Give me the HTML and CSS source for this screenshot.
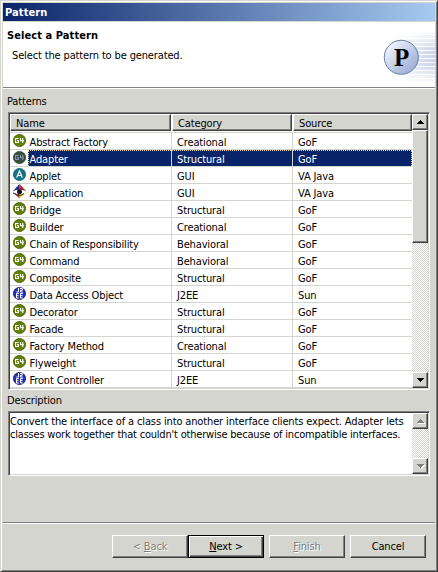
FILE: index.html
```html
<!DOCTYPE html>
<html lang="en">
<head>
<meta charset="utf-8">
<title>Pattern</title>
<link rel="stylesheet" href="styles.css">
</head>
<body>
<svg class="defs" aria-hidden="true">
  <symbol id="g4" viewBox="0 0 13 13">
    <circle cx="6.5" cy="6.5" r="6.1" fill="#628002" stroke="#3f5500" stroke-width=".8"/>
    <path d="M5.6 4.5H2.6V8.5H5.4V6.6H4.2M7.5 4V6.7H11M9.7 4V9" fill="none" stroke="#fff" stroke-width="1.1"/>
  </symbol>
  <symbol id="g4-selected" viewBox="0 0 13 13">
    <circle cx="6.5" cy="6.5" r="6.1" fill="#355138" stroke="#263d3c" stroke-width=".8"/>
    <path d="M5.6 4.5H2.6V8.5H5.4V6.6H4.2M7.5 4V6.7H11M9.7 4V9" fill="none" stroke="#8793b5" stroke-width="1.1"/>
  </symbol>
  <symbol id="applet" viewBox="0 0 13 13">
    <circle cx="6.5" cy="6.5" r="6.1" fill="#167389" stroke="#0d596e" stroke-width=".8"/>
    <path d="M3.7 9.5L6.5 3L9.3 9.5M4.8 7.5H8.2" fill="none" stroke="#fff" stroke-width="1.2"/>
  </symbol>
  <symbol id="j2ee" viewBox="0 0 13 13">
    <circle cx="6.5" cy="6.5" r="6.1" fill="#1f2fc0" stroke="#26105c" stroke-width=".8"/>
    <path d="M5.5 1V5H3.4M7 1.5H9.3V3.2H7.5V5H9.8M5.8 6.5H3.5V11H5.8M3.5 8.7H5.6M9.8 6.5H7.5V11H9.8M7.5 8.7H9.6" fill="none" stroke="#fff" stroke-width="1"/>
  </symbol>
  <symbol id="application" viewBox="0 0 15 15">
    <path d="M7.5 0L1 7L7.5 6Z" fill="#1c2c9c"/>
    <path d="M7.5 0L14 7L7.5 6Z" fill="#d51818"/>
    <path d="M1 8L7.5 14.5L7.5 9Z" fill="#b3242c"/>
    <path d="M7.5 14.5L14 8L7.5 9Z" fill="#e7c71b"/>
    <path d="M0 7.5Q7 2.5 15 7.5Q8 13 0 7.5Z" fill="#fff"/>
    <path d="M0 7.8Q7 1.5 15 7.8Q11 5.6 7.5 5.6Q4 5.6 0 7.8Z" fill="#111"/>
    <circle cx="7.5" cy="7.8" r="2.5" fill="#141428"/>
    <path d="M1 9Q7.5 13.5 12 9.6" fill="none" stroke="#333"/>
  </symbol>
</svg>
<div class="dialog">
  <div class="titlebar">Pattern</div>
  <header class="banner">
    <div class="banner-text">
      <h1>Select a Pattern</h1>
      <p>Select the pattern to be generated.</p>
    </div>
    <svg class="banner-art" width="59" height="65" viewBox="376 22 59 65">
      <defs>
        <linearGradient id="fade"><stop offset="0" stop-color="#c3cde8" stop-opacity="0"/><stop offset="1" stop-color="#c9d2eb"/></linearGradient>
        <linearGradient id="vfade" x2="0" y2="1"><stop offset="0" stop-color="#000"/><stop offset=".35" stop-color="#fff"/><stop offset=".65" stop-color="#fff"/><stop offset="1" stop-color="#000"/></linearGradient>
        <linearGradient id="ball" x2="1" y2="1"><stop offset=".12" stop-color="#f2f5fc"/><stop offset=".6" stop-color="#b9c5e2"/><stop offset="1" stop-color="#91a4cf"/></linearGradient>
        <pattern id="bars" width="4" height="4" patternUnits="userSpaceOnUse" y="39"><path d="M0 0H4V3H0Z" fill="#fff"/></pattern>
        <mask id="barmask"><path d="M376 31H435V84H376Z" fill="url(#bars)"/></mask>
        <mask id="vmask"><path d="M376 31H435V84H376Z" fill="url(#vfade)"/></mask>
      </defs>
      <g mask="url(#vmask)"><path d="M392 31H435V84H392Z" fill="url(#fade)" mask="url(#barmask)"/></g>
      <circle cx="401.3" cy="57.3" r="17" fill="url(#ball)" stroke="#6680a8"/>
      <text x="401.5" y="66" text-anchor="middle" class="ball-letter">P</text>
    </svg>
  </header>
  <main class="content">
    <div class="label patterns-label">Patterns</div>
    <div class="sunken table-box">
      <div class="table">
        <div class="row head"><span class="th">Name</span><span class="th">Category</span><span class="th">Source</span></div>
        <div class="row"><span class="name"><svg class="ico"><use href="#g4"/></svg><b>Abstract Factory</b></span><span>Creational</span><span>GoF</span></div>
        <div class="row selected"><span class="name"><svg class="ico"><use href="#g4-selected"/></svg><b>Adapter</b></span><span>Structural</span><span>GoF</span></div>
        <div class="row"><span class="name"><svg class="ico"><use href="#applet"/></svg><b>Applet</b></span><span>GUI</span><span>VA Java</span></div>
        <div class="row"><span class="name"><svg class="ico wide"><use href="#application"/></svg><b>Application</b></span><span>GUI</span><span>VA Java</span></div>
        <div class="row"><span class="name"><svg class="ico"><use href="#g4"/></svg><b>Bridge</b></span><span>Structural</span><span>GoF</span></div>
        <div class="row"><span class="name"><svg class="ico"><use href="#g4"/></svg><b>Builder</b></span><span>Creational</span><span>GoF</span></div>
        <div class="row"><span class="name"><svg class="ico"><use href="#g4"/></svg><b>Chain of Responsibility</b></span><span>Behavioral</span><span>GoF</span></div>
        <div class="row"><span class="name"><svg class="ico"><use href="#g4"/></svg><b>Command</b></span><span>Behavioral</span><span>GoF</span></div>
        <div class="row"><span class="name"><svg class="ico"><use href="#g4"/></svg><b>Composite</b></span><span>Structural</span><span>GoF</span></div>
        <div class="row"><span class="name"><svg class="ico"><use href="#j2ee"/></svg><b>Data Access Object</b></span><span>J2EE</span><span>Sun</span></div>
        <div class="row"><span class="name"><svg class="ico"><use href="#g4"/></svg><b>Decorator</b></span><span>Structural</span><span>GoF</span></div>
        <div class="row"><span class="name"><svg class="ico"><use href="#g4"/></svg><b>Facade</b></span><span>Structural</span><span>GoF</span></div>
        <div class="row"><span class="name"><svg class="ico"><use href="#g4"/></svg><b>Factory Method</b></span><span>Creational</span><span>GoF</span></div>
        <div class="row"><span class="name"><svg class="ico"><use href="#g4"/></svg><b>Flyweight</b></span><span>Structural</span><span>GoF</span></div>
        <div class="row"><span class="name"><svg class="ico"><use href="#j2ee"/></svg><b>Front Controller</b></span><span>J2EE</span><span>Sun</span></div>
      </div>
      <div class="scrollbar">
        <div class="arrow raised"><svg width="7" height="4"><path d="M3 0H4V1H5V2H6V3H7V4H0V3H1V2H2V1H3Z"/></svg></div>
        <div class="thumb raised"></div>
        <div class="arrow raised end"><svg width="7" height="4"><path d="M0 0H7V1H6V2H5V3H4V4H3V3H2V2H1V1H0Z"/></svg></div>
      </div>
    </div>
    <div class="label description-label">Description</div>
    <div class="sunken description-box">
      <p class="description"><span>Convert the interface of a class into another interface clients expect. Adapter lets</span><br><span class="second">classes work together that couldn't otherwise because of incompatible interfaces.</span></p>
      <div class="scrollbar disabled">
        <div class="arrow raised"><svg width="7" height="4"><path d="M3 0H4V1H5V2H6V3H7V4H0V3H1V2H2V1H3Z"/></svg></div>
        <div class="arrow raised end"><svg width="7" height="4"><path d="M0 0H7V1H6V2H5V3H4V4H3V3H2V2H1V1H0Z"/></svg></div>
      </div>
    </div>
  </main>
  <footer class="buttons">
    <button class="btn raised" disabled>&lt; <u>B</u>ack</button>
    <button class="btn default"><u>N</u>ext &gt;</button>
    <button class="btn raised finish" disabled><u>F</u>inish</button>
    <button class="btn raised">Cancel</button>
  </footer>
</div>
</body>
</html>
```
FILE: styles.css
```css
* { box-sizing: border-box; }

body {
  margin: 0;
  font: 11px/13px "DejaVu Sans Condensed", "DejaVu Sans", sans-serif;
  font-stretch: condensed;
  letter-spacing: -0.14px;
  color: #000;
}

.defs { position: absolute; width: 0; height: 0; }

.dialog {
  width: 438px;
  height: 572px;
  display: flex;
  flex-direction: column;
  padding: 1px;
  background: #d5d5cf;
  border: 1px solid;
  border-color: #d5d5cf #404040 #404040 #d5d5cf;
  box-shadow: inset 1px 1px #fff, inset -1px -1px #808080;
}

.titlebar {
  height: 18px;
  margin: 1px 1px 0;
  padding: 3px 2px 0;
  color: #fff;
  font-weight: bold;
  letter-spacing: 0.1px;
  background: linear-gradient(90deg, #0a246a, #a6caf0);
}

.banner {
  height: 66px;
  margin: 1px 1px 0;
  display: flex;
  justify-content: space-between;
  background: #fff;
  border-bottom: 1px solid #808084;
}

.banner-text { padding: 7px 0 0 4px; }
h1 { margin: 0; font-size: 11px; line-height: 14px; letter-spacing: 0.08px; }
.banner-text p { margin: 6px 0 0 5px; }
.banner-art { display: block; }
.ball-letter { font: bold 25px "Liberation Serif", serif; }

.content { padding: 0 5px; border-top: 1px solid #fff; margin: 0 1px; }
.label { height: 13px; margin-left: -1px; }
.patterns-label { margin-top: 6px; }

.sunken {
  width: 422px;
  display: flex;
  background: #fff;
  border: 1px solid;
  border-color: #808080 #fff #fff #808080;
  box-shadow: inset 1px 1px #404040, inset -1px -1px #d5d5cf;
  padding: 1px;
}

.table-box { height: 278px; margin-top: 4px; }
.table { width: 402px; }

.row {
  display: grid;
  grid-template-columns: 162px 121px 119px;
  height: 17px;
  border-bottom: 1px solid #d5d5cf;
}

.row > span {
  padding: 3px 0 0 5px;
  border-right: 1px solid #d5d5cf;
  white-space: nowrap;
}

.row > span:last-child { border-right: 0; }
.row.head { height: 19px; padding-bottom: 1px; }

.row .th {
  background: #d5d5cf;
  border: 1px solid;
  border-color: #fff #404040 #404040 #fff;
  box-shadow: inset -1px -1px #808080;
  margin-right: 1px;
  padding-top: 2px;
}

.row .th:last-child { border-right: 1px solid #404040; margin-right: 0; }

.row .name { display: flex; padding: 0 0 0 3px; }
.row b { flex: 1; padding: 3px 0 0 1.5px; margin-left: 2px; font-weight: normal; }
.ico { width: 13px; height: 13px; margin-top: 1px; }
.ico.wide { width: 15px; height: 15px; margin: 0 -1px; }

.selected b, .row.selected > span:not(.name) {
  color: #fff;
  background: #0a246a;
  border-top: 1px dotted #e8dca0;
  padding-top: 2px;
}

.selected b { border-left: 1px dotted #e8dca0; padding-left: 0.5px; }
.row.selected > span:last-child { border-right: 1px dotted #e8dca0; }

.scrollbar {
  width: 16px;
  display: flex;
  flex-direction: column;
  background: repeating-conic-gradient(#fff 0 25%, #d5d5cf 0 50%) 0 0 / 2px 2px;
}

.raised {
  background: #d5d5cf;
  border: 1px solid;
  border-color: #fff #404040 #404040 #fff;
  box-shadow: inset -1px -1px #808080;
}

.arrow { height: 16px; display: flex; align-items: center; justify-content: center; }
.thumb { height: 113px; }
.end { margin-top: auto; }
.disabled path { fill: #808080; }
.disabled svg { filter: drop-shadow(1px 1px 0 #fff); }

.description-label { margin-top: 4px; }
.description-box { height: 65px; margin-top: 4px; }
.description { width: 402px; margin: 0; padding-top: 2px; white-space: nowrap; }
.second { letter-spacing: -0.2px; }

.buttons {
  display: flex;
  margin: auto 1px 0;
  height: 48px;
  padding: 12px 0 0 109px;
  border-top: 1px solid #808084;
  box-shadow: inset 0 1px #fff;
}

.btn {
  width: 76px;
  height: 23px;
  padding: 0;
  font: inherit;
  letter-spacing: inherit;
  color: #000;
}

.btn:disabled { color: #808080; text-shadow: 1px 1px #fff; }

.btn.default {
  background: #d5d5cf;
  border: 1px solid #000;
  box-shadow: inset 1px 1px #fff, inset -1px -1px #404040, inset -2px -2px #808080;
}

.finish { margin: 0 5px; }
u { text-underline-offset: 1px; }
```
